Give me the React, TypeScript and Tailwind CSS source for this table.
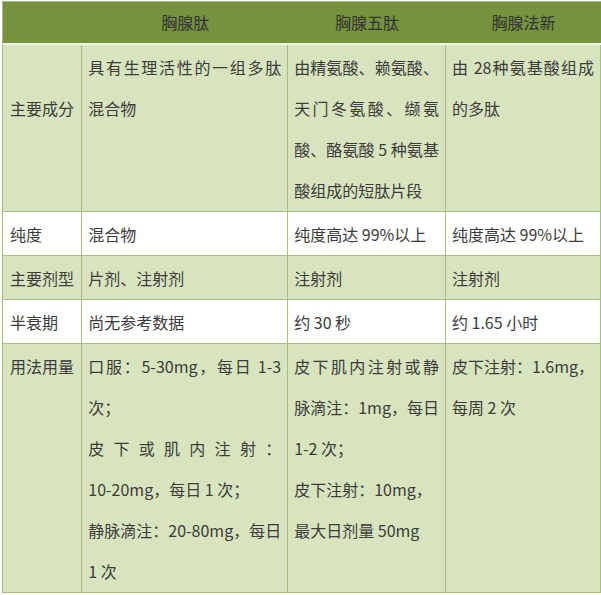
import React from "react";

type Line = { t: string; j?: boolean };
type Row = { label: Line[]; shade: boolean; cells: Line[][] };

const J = (t: string): Line => ({ t, j: true });
const L = (t: string): Line => ({ t });

const headers = ["", "胸腺肽", "胸腺五肽", "胸腺法新"];

const rows: Row[] = [
  {
    label: [L("\u00a0"), L("主要成分")],
    shade: true,
    cells: [
      [J("具有生理活性的一组多肽"), L("混合物")],
      [J("由精氨酸、赖氨酸、"), J("天门冬氨酸、缬氨"), J("酸、酪氨酸 5 种氨基"), L("酸组成的短肽片段")],
      [J("由 28种氨基酸组成"), L("的多肽")],
    ],
  },
  {
    label: [L("纯度")],
    shade: false,
    cells: [[L("混合物")], [L("纯度高达 99%以上")], [L("纯度高达 99%以上")]],
  },
  {
    label: [L("主要剂型")],
    shade: true,
    cells: [[L("片剂、注射剂")], [L("注射剂")], [L("注射剂")]],
  },
  {
    label: [L("半衰期")],
    shade: false,
    cells: [[L("尚无参考数据")], [L("约 30 秒")], [L("约 1.65 小时")]],
  },
  {
    label: [L("用法用量")],
    shade: true,
    cells: [
      [
        J("口服：5-30mg，每日 1-3"),
        L("次；"),
        J("皮下或肌内注射："),
        L("10-20mg，每日 1 次；"),
        J("静脉滴注：20-80mg，每日"),
        L("1 次"),
      ],
      [J("皮下肌内注射或静"), J("脉滴注：1mg，每日"), L("1-2 次；"), L("皮下注射：10mg，"), L("最大日剂量 50mg")],
      [J("皮下注射：1.6mg，"), L("每周 2 次")],
    ],
  },
];

function CellLines({ lines }: { lines: Line[] }) {
  return (
    <>
      {lines.map((line, i) => (
        <div
          key={i}
          className={
            line.j
              ? "whitespace-nowrap text-justify [text-align-last:justify]"
              : "whitespace-nowrap text-left"
          }
        >
          {line.t}
        </div>
      ))}
    </>
  );
}

export default function App() {
  return (
    <div className="min-h-[595px] w-[601px] bg-white pl-[2px] pt-px font-['Noto_Sans_CJK_SC',sans-serif] text-[16px] text-[#3c3c3c]">
      <table className="table-fixed border-separate border-spacing-0 border-l border-t border-[#a6c07c]">
        <colgroup>
          <col className="w-[82px]" />
          <col className="w-[206px]" />
          <col className="w-[158px]" />
          <col className="w-[149px]" />
        </colgroup>
        <thead>
          <tr>
            {headers.map((h, i) => (
              <th
                key={i}
                className="border-b-2 border-b-[#f1f5e6] bg-[#76923c] p-0 text-center font-normal leading-[41px] text-[#333]"
              >
                {h}
              </th>
            ))}
          </tr>
        </thead>
        <tbody>
          {rows.map((row, r) => (
            <tr key={r} className={row.shade ? "bg-[#d7e4bd]" : "bg-white"}>
              <td className="border-b border-r border-[#a6c07c] px-[7px] pb-0 pt-[2px] align-top leading-[41px]">
                <CellLines lines={row.label} />
              </td>
              {row.cells.map((cell, c) => (
                <td
                  key={c}
                  className="border-b border-r border-[#a6c07c] px-[6px] pb-0 pt-[2px] align-top leading-[41px]"
                >
                  <CellLines lines={cell} />
                </td>
              ))}
            </tr>
          ))}
        </tbody>
      </table>
    </div>
  );
}
